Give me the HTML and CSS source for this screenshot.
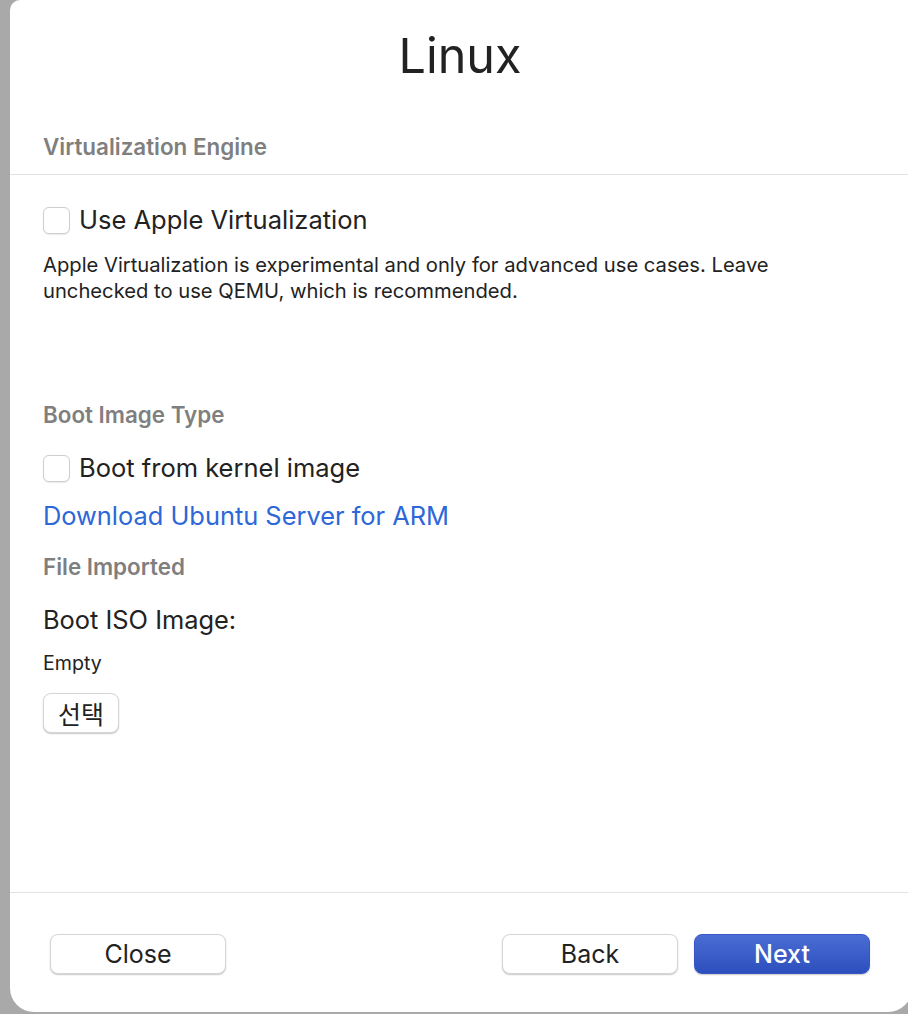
FILE: index.html
```html
<!DOCTYPE html>
<html>
<head>
<meta charset="utf-8">
<link rel="stylesheet" href="styles.css">
</head>
<body>
<div class="window">
  <div class="header">
    <h1 class="title">Linux</h1>
    <div class="section-label first">Virtualization Engine</div>
  </div>
  <div class="content">
    <label class="check-row first-check"><span class="checkbox"></span><span class="check-text">Use Apple Virtualization</span></label>
    <p class="desc">Apple Virtualization is experimental and only for advanced use cases. Leave<br>unchecked to use QEMU, which is recommended.</p>
    <div class="section-label boot-type">Boot Image Type</div>
    <label class="check-row second-check"><span class="checkbox"></span><span class="check-text">Boot from kernel image</span></label>
    <a class="link">Download Ubuntu Server for ARM</a>
    <div class="section-label imported">File Imported</div>
    <div class="field-title">Boot ISO Image:</div>
    <div class="field-value">Empty</div>
    <button class="btn small">선택</button>
  </div>
  <div class="footer">
    <button class="btn wide">Close</button>
    <div class="footer-right">
      <button class="btn wide">Back</button>
      <button class="btn wide primary">Next</button>
    </div>
  </div>
</div>
</body>
</html>
```
FILE: styles.css
```css
* { box-sizing: border-box; }
html, body { margin: 0; padding: 0; }
body {
  background: #a9a9a9;
  font-family: Inter, "Noto Sans", "Noto Sans CJK KR", sans-serif;
  color: #232323;
  height: 1014px;
  overflow: hidden;
}
.window {
  margin-left: 10px;
  width: 902px;
  height: 1012px;
  background: #ffffff;
  border-radius: 10px 0 24px 24px;
  display: flex;
  flex-direction: column;
}
.header {
  border-bottom: 1px solid #e2e2e2;
  padding: 0 0 15px 33px;
}
.title {
  margin: 26px 0 0 -33px;
  padding-right: 2px;
  text-align: center;
  font-size: 48.5px;
  font-weight: 400;
  line-height: 60px;
  color: #222;
}
.section-label {
  font-size: 22.4px;
  font-weight: 600;
  line-height: 24px;
  color: #7f7f7f;
}
.section-label.first { margin-top: 49px; }
.content {
  flex: 1;
  padding-left: 33px;
  display: flex;
  flex-direction: column;
  align-items: flex-start;
}
.check-row {
  display: flex;
  align-items: center;
  height: 28px;
  gap: 9px;
}
.first-check { margin-top: 31px; }
.checkbox {
  width: 27px;
  height: 27px;
  border: 1px solid #cfcfcf;
  border-radius: 6px;
  background: #fff;
  box-shadow: 0 0.5px 1px rgba(0,0,0,0.08);
}
.check-text {
  font-size: 25.5px;
  line-height: 28px;
  color: #222;
}
.desc {
  margin: 18px 0 0;
  font-size: 20.2px;
  line-height: 26px;
  color: #222;
}
.boot-type { margin-top: 99px; }
.second-check { margin-top: 27px; }
.link {
  margin-top: 19px;
  font-size: 25.4px;
  line-height: 30px;
  color: #2d67d8;
}
.imported { margin-top: 24px; }
.field-title {
  margin-top: 26px;
  font-size: 25.4px;
  line-height: 30px;
  color: #222;
}
.field-value {
  margin-top: 17px;
  font-size: 19.6px;
  line-height: 22px;
  color: #222;
}
.btn {
  font-family: Inter, "Noto Sans CJK KR", sans-serif;
  background: #fff;
  border: 0.5px solid #d6d6d6;
  border-radius: 8px;
  box-shadow: 0 1px 1.5px rgba(0,0,0,0.22);
  color: #222;
  height: 40px;
  padding: 0;
  font-size: 25px;
}
.btn.small {
  margin-top: 19px;
  width: 76px;
  font-family: "Noto Sans CJK KR", sans-serif;
  font-size: 25px;
}
.footer {
  height: 120px;
  border-top: 1px solid #e2e2e2;
  padding: 41px 42px 0 40px;
  display: flex;
  justify-content: space-between;
  align-items: flex-start;
}
.footer-right {
  display: flex;
  gap: 16px;
}
.btn.wide { width: 176px; }
.btn.primary {
  background: linear-gradient(#4a6dd3, #2c4fbe);
  border-color: #3856c4;
  color: #fff;
  font-weight: 500;
}
```
